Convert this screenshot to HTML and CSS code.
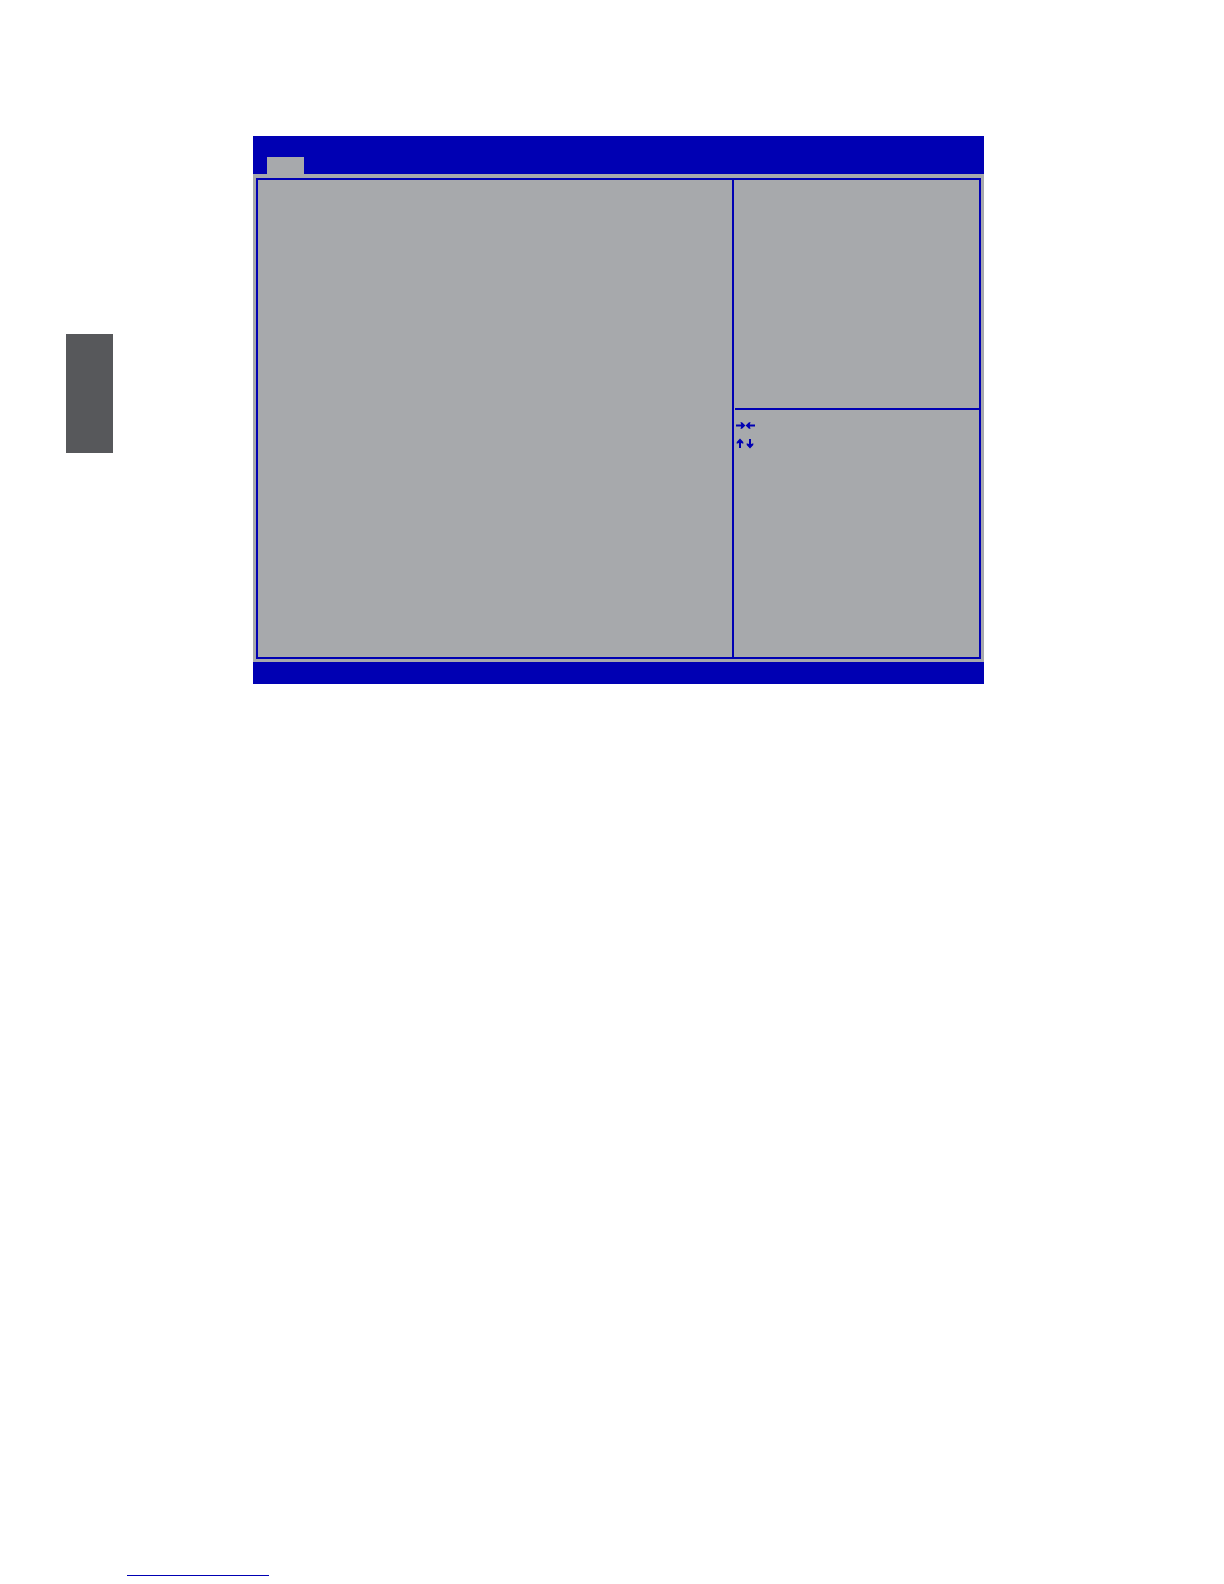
FILE: index.html
```
<!DOCTYPE html>
<html lang="en">
<head>
<meta charset="utf-8">
<meta name="viewport" content="width=device-width, initial-scale=1">
<title>BIOS Setup</title>
<link rel="stylesheet" href="styles.css">
</head>
<body>
<main class="page">
  <aside class="chapter-mark"></aside>
  <section class="bios">
    <header class="bios-header"><div class="tab"></div></header>
    <div class="bios-body">
      <div class="frame">
        <div class="settings"></div>
        <div class="side">
          <div class="help"></div>
          <div class="keys">
            <svg class="key" width="20" height="11" viewBox="0 0 20 11" aria-hidden="true">
              <path d="M0 4.5H5.2L4.4 2.3H6L9.4 5.5L6 8.7H4.4L5.2 6.5H0ZM19 4.5H13.8L14.6 2.3H13L9.6 5.5L13 8.7H14.6L13.8 6.5H19Z"/>
            </svg>
            <svg class="key" width="20" height="11" viewBox="0 0 20 11" aria-hidden="true">
              <path d="M4 .5L7.3 4V5.7L5 4.9V10H3V4.9L.7 5.7V4ZM14 10.4L10.7 6.9V5.2L13 6V.9H15V6L17.3 5.2V6.9Z"/>
            </svg>
          </div>
        </div>
      </div>
    </div>
    <footer class="bios-footer"></footer>
  </section>
</main>
<footer class="page-footer"><a class="footer-link" href="#" aria-label="Contents"></a></footer>
</body>
</html>
```
FILE: styles.css
```
* {
  box-sizing: border-box;
}

body {
  margin: 0;
  min-height: 100vh;
  display: flex;
  flex-direction: column;
  justify-content: space-between;
  background: #fff;
  font-family: "Liberation Sans", Arial, sans-serif;
}

.page {
  display: grid;
  grid-template-columns: 47px 1fr;
  column-gap: 140px;
  align-items: start;
  padding: 136px 240px 0 66px;
}

.chapter-mark {
  height: 119px;
  margin-top: 198px;
  background: #57585b;
}

.bios {
  background: #a7a9ac;
}

.bios-header {
  display: flex;
  align-items: flex-end;
  height: 38px;
  padding-left: 14px;
  background: #0000b3;
}

.tab {
  width: 37px;
  height: 17px;
  background: #a7a9ac;
}

.bios-body {
  padding: 4px 3px 3px;
}

.frame {
  display: grid;
  grid-template-columns: 474px 1fr;
  min-height: 481px;
  border: 2px solid #0000b3;
}

.side {
  display: grid;
  grid-template-rows: 230px 1fr;
  border-left: 2px solid #0000b3;
}

.help {
  margin-left: 1px;
  border-bottom: 2px solid #0000b3;
}

.keys {
  display: flex;
  flex-direction: column;
  gap: 7px;
  padding: 10px 2px;
}

.key {
  display: block;
  fill: #0000b3;
}

.bios-footer {
  height: 22px;
  background: #0000b3;
}

.page-footer {
  padding: 0 127px 8px;
}

.footer-link {
  display: block;
  width: 142px;
  height: 16px;
  border-bottom: 1px solid #0000b3;
}
```
